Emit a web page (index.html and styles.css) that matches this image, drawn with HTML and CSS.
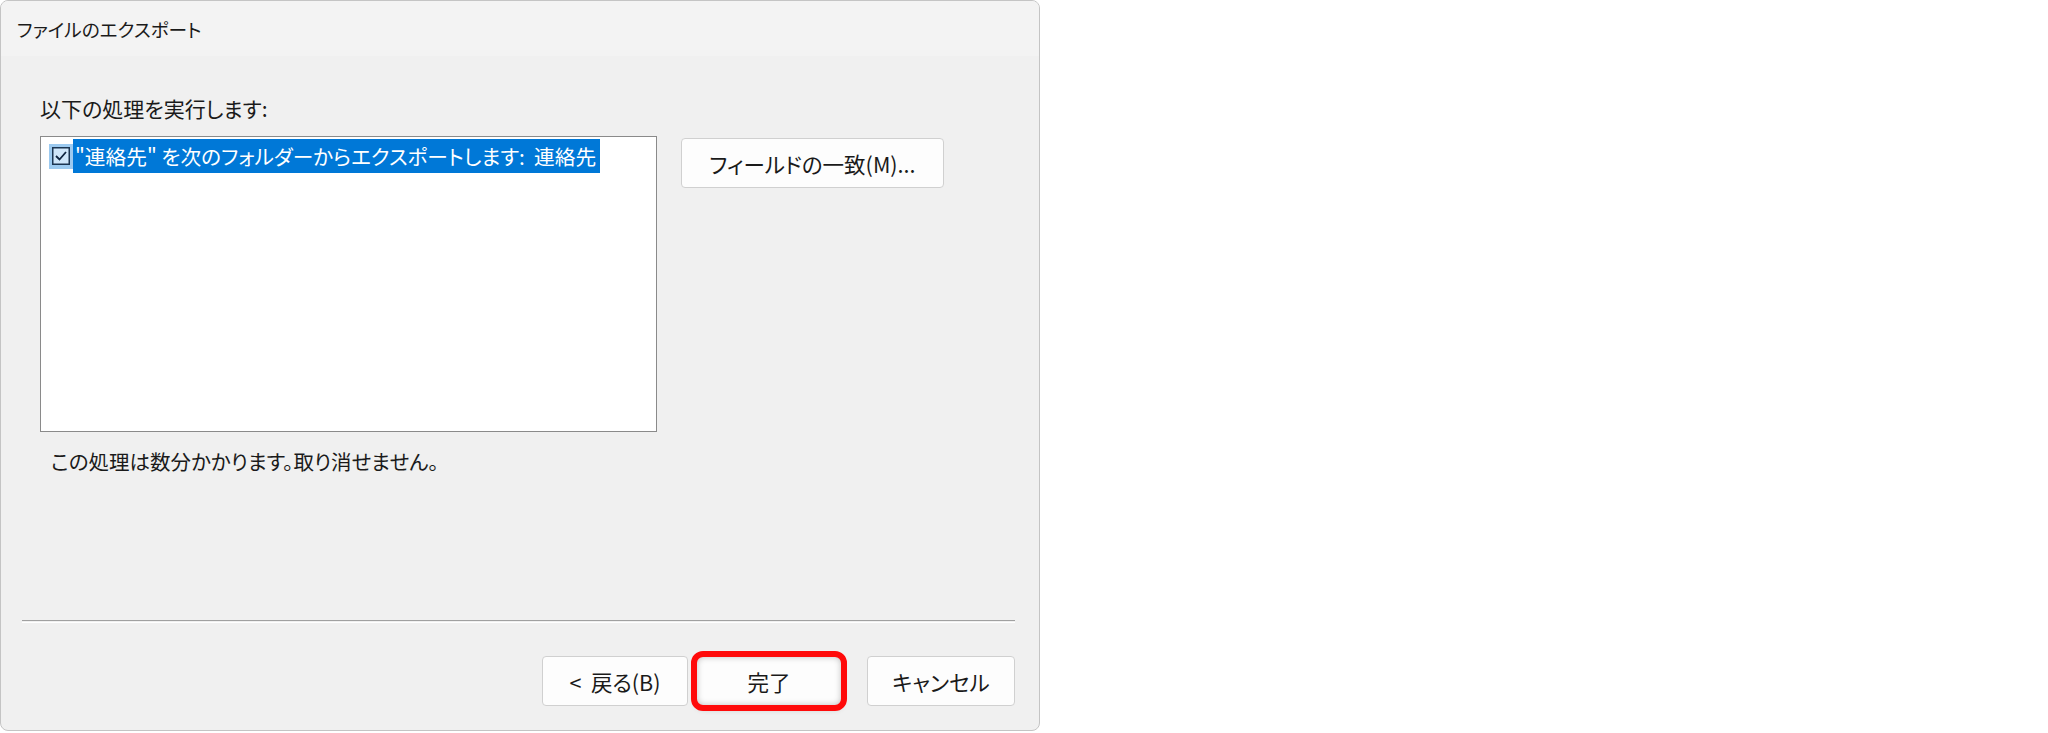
FILE: index.html
```html
<!DOCTYPE html>
<html lang="ja">
<head>
  <meta charset="UTF-8">
  <title>ファイルのエクスポート</title>
  <link rel="stylesheet" href="styles.css">
</head>
<body>

  <div class="dialog">
    <div class="titlebar">ファイルのエクスポート</div>

    <div class="content">
      <div class="label">以下の処理を実行します:</div>

      <div class="row">
        <div class="listbox">
          <div class="item">
            <span class="check">
              <svg width="18" height="18" viewBox="0 0 18 18">
                <rect x="0.75" y="0.75" width="16.5" height="16.5" fill="#cfe6fa" stroke="#1b3552" stroke-width="1.5"/>
                <path d="M4 9 L7.5 12.5 L14 5" fill="none" stroke="#0f2540" stroke-width="1.8"/>
              </svg>
            </span>
            <span class="selected">"連絡先" を次のフォルダーからエクスポートします:&nbsp; 連絡先</span>
          </div>
        </div>
        <button class="btn field">フィールドの一致(M)...</button>
      </div>

      <div class="note">この処理は数分かかります。取り消せません。</div>
    </div>

    <div class="separator"></div>

    <div class="footer">
      <button class="btn back">&lt;&nbsp; 戻る(B)</button>
      <button class="btn finish">完了</button>
      <button class="btn cancel">キャンセル</button>
    </div>
  </div>

</body>
</html>
```

FILE: styles.css
```css
body { margin: 0; background: #fff; font-family: "Noto Sans CJK JP", "Noto Sans", sans-serif; font-feature-settings: "palt"; color: #1a1a1a; }
.dialog { width: 1038px; height: 729px; border: 1px solid #c4c4c4; border-radius: 8px; background: #f0f0f0; display: flex; flex-direction: column; overflow: hidden; }
.titlebar { height: 55px; line-height: 56px; padding-left: 16px; font-size: 18.7px; background: #f3f3f3; }
.content { flex: 1; padding: 37px 0 0 39px; }
.label { font-size: 21px; line-height: 30px; height: 30px; }
.row { display: flex; align-items: flex-start; margin-top: 13px; }
.listbox { width: 615px; height: 294px; border: 1px solid #8a8a8a; background: #fff; }
.item { display: flex; align-items: center; margin-top: 2px; }
.check { width: 24px; height: 25px; margin-left: 8px; background: #9ccaf0; display: flex; align-items: center; justify-content: center; }
.check svg { display: block; }
.selected { height: 34px; line-height: 34px; padding: 0 4px 0 2px; background: #0078d7; color: #fff; font-size: 20.7px; }
.btn { height: 50px; border: 1px solid #d0d0d0; border-radius: 4px; background: #fdfdfd; font-family: inherit; font-feature-settings: "palt"; font-size: 21.5px; color: #1a1a1a; padding: 0; }
.field { width: 263px; margin: 2px 0 0 24px; }
.note { font-size: 20.5px; line-height: 30px; margin: 14px 0 0 11px; }
.separator { height: 1px; margin: 0 24px 0 21px; border-top: 1px solid #a0a0a0; border-bottom: 1px solid #fff; }
.footer { display: flex; justify-content: flex-end; padding: 33px 24px 24px 0; }
.back { width: 146px; }
.finish { width: 146px; margin-left: 8px; outline: 6px solid #ff0a0a; outline-offset: -1px; border-radius: 7px; box-shadow: inset 0 0 6px rgba(0,0,0,0.25), 0 3px 6px rgba(0,0,0,0.2); }
.cancel { width: 148px; margin-left: 25px; }
```
